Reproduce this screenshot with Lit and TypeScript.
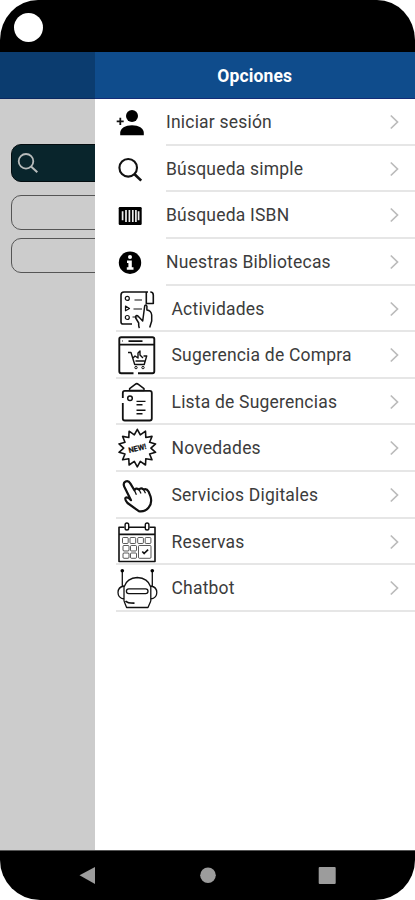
import { LitElement, html, svg, css } from "lit";
import { customElement } from "lit/decorators.js";
import { classMap } from "lit/directives/class-map.js";

const burst = Array.from({ length: 28 }, (_, i) => {
  const a = (i * Math.PI) / 14 - Math.PI / 2;
  const r = i % 2 ? 13.6 : 18.8;
  return `${(20.3 + r * Math.cos(a)).toFixed(1)},${(23.1 + r * Math.sin(a)).toFixed(1)}`;
}).join(" ");

const icons = {
  login: svg`<g class="fill"><circle cx="15" cy="17" r="6"/><path d="M3.2 36.2v-2.4c0-4.7 5.2-7.6 11.8-7.6s11.8 2.9 11.8 7.6v2.4z"/></g>
    <path stroke-width="1.8" d="M-.3 22.3h7M3.3 18.7v7.2"/>`,
  search: svg`<circle cx="11.2" cy="21.8" r="8.8" stroke-width="2.1"/><path stroke-width="2.7" d="m17.6 28.2 6.6 6.4"/>`,
  isbn: svg`<rect class="fill" x="1.7" y="15" width="23" height="18" rx="1.2"/>
    <path class="white" stroke-width="1.7" d="M5.6 19.3v9M9 17.9v12M12.4 17.9v12M15.8 17.9v12M18.9 17.9v12M21.6 19.3v9"/>`,
  info: svg`<circle class="fill" cx="13" cy="23.7" r="11.2"/><circle class="paper" cx="13" cy="18" r="2"/>
    <path class="paper" d="M10 21.5h4.8v6.7h1.7v2.5H9.8v-2.5h1.6V24H10z"/>`,
  activities: svg`<path stroke-width="1.6" d="M31 6H7Q4 6 4 9v27q0 2 2 2h9M29.3 6v11.5h7V9q0-3-3-3"/>
    <g stroke-width="1.2"><circle cx="10.3" cy="12.4" r="2"/><path d="m8.5 20 4 2.4-4 2.4z"/><circle cx="10.3" cy="31.5" r="2"/><path d="M17.5 14h7.5M16.5 23h8.5M15.5 31h5"/></g>
    <path stroke-width="1.5" d="M22.5 42q-1-1-.8-5l-3-5q-.7-3 2-2.3l5 5.3 2-15q1.2-2 2.2 0M29.9 20v4q4.3.5 4.8 5v6l-2 6.5"/>`,
  purchase: svg`<path stroke-width="1.9" d="M16.5 41.2H4.2q-1.9 0-1.9-2V7q0-1.8 1.9-1.8h31.2q1.9 0 1.9 1.8v32.2q0 2-1.9 2H21M2.3 12.6h35M11.5 9.1h14"/>
    <path stroke-width=".9" d="M5 9h1"/><path stroke-width="1.4" d="M11 20.5h3l3.7 12h9.5l2.5-8.5h-3.2M16 26l2-2 3 2v-5l2-2v4l3 3M18.5 29h9"/>
    <circle cx="19" cy="35.6" r="1.2"/><circle cx="26" cy="35.6" r="1.2"/>`,
  list: svg`<path stroke-width="1.8" d="M5.8 24v15.5q0 2 2 2h25q2 0 2-2V14q0-2.2-2-2.2h-25q-2 0-2 2.2v5"/>
    <path stroke-width="1.5" d="M12.6 11.5V9.7l5.6-4.4q1.6-1.3 3.2 0L27 9.7v1.8z"/><circle cx="13" cy="19.2" r="2.3" stroke-width="1.5"/>
    <path stroke-width="1.4" d="M19.5 22.4h9M19.5 25.8h6M19.5 31.3h9M19.5 34.7h6"/>`,
  news: svg`<polygon points=${burst} stroke-width="1.6"/><text x="20.3" y="26" transform="rotate(-14 20.3 23)">NEW!</text>`,
  digital: svg`<path stroke-width="2.2" d="M8.7 25.7q2-1 5.3 2.5L7.2 14.5Q5.8 11 8.6 9.6t5 2.3l3.8 6.4q1.2-2.8 4.6-.8 2-2.2 4.5 0 3-1.6 5.2 2.3l1.8 4.5q2 7.2-2 11.4-3.8 4.5-9.7 3.5L10.5 31q-3.2-3.7-1.8-5.3z"/>
    <path stroke-width="1.3" d="m17.4 18.3 2 4.4m2.6-5.2 2 4m2.5-4 2 3.8"/>`,
  bookings: svg`<path stroke-width="1.6" d="M7.5 8.3H2v34.2h36V8.3h-5.5M12 8.3h16M2 15.4h36"/><rect x="8.1" y="4" width="3.6" height="7" rx="1.8" stroke-width="1.4"/><rect x="28.3" y="4" width="3.6" height="7" rx="1.8" stroke-width="1.4"/>
    <g stroke-width=".7"><rect x="5.5" y="18.5" width="5.7" height="6" rx="1"/><rect x="13" y="18.5" width="5.7" height="6" rx="1"/><rect x="20.7" y="18.5" width="5.7" height="6" rx="1"/><rect x="28.2" y="18.5" width="5.7" height="6" rx="1"/>
    <rect x="6" y="26.5" width="6" height="5.5" rx="1"/><rect x="13.5" y="26.5" width="6" height="5.5" rx="1"/><rect x="6" y="34" width="6" height="5.3" rx="1"/><rect x="13.5" y="34" width="6" height="5.3" rx="1"/><rect x="21.5" y="26.5" width="12.5" height="12.8" rx="1"/></g>
    <path stroke-width="1.7" d="m25.3 32.5 1.8 2 4-3.8"/>`,
  chatbot: svg`<g stroke-width="1.3"><path d="M5.3 7v14M35.3 7v14M7 22Q10 12.8 20.3 12.5 30.8 12.8 33.8 22M7 21v15M33.8 21v15M7 21q-6 1-6 6.5T7 34M33.8 21q6 1 6 6.5t-6 6.5M7 36l2.6 6.5h21.4L33.8 36"/>
    <rect x="9.4" y="23.8" width="21.6" height="4.9" rx="2.4"/><path d="M8.5 36q2 2.3 9 2.2" stroke-width="1.8"/></g><circle class="fill" cx="5.3" cy="5.8" r="1.8"/><circle class="fill" cx="35.3" cy="5.8" r="1.8"/>`,
};

const items = [
  { icon: icons.login, label: "Iniciar sesión" },
  { icon: icons.search, label: "Búsqueda simple" },
  { icon: icons.isbn, label: "Búsqueda ISBN" },
  { icon: icons.info, label: "Nuestras Bibliotecas" },
  { icon: icons.activities, label: "Actividades", wide: true },
  { icon: icons.purchase, label: "Sugerencia de Compra", wide: true },
  { icon: icons.list, label: "Lista de Sugerencias", wide: true },
  { icon: icons.news, label: "Novedades", wide: true },
  { icon: icons.digital, label: "Servicios Digitales", wide: true },
  { icon: icons.bookings, label: "Reservas", wide: true },
  { icon: icons.chatbot, label: "Chatbot", wide: true },
];

@customElement("app-root")
export class AppRoot extends LitElement {
  static styles = css`
    :host { display: flex; flex-direction: column; height: 900px; background: #fff; font-family: Roboto, sans-serif; overflow: hidden; }
    * { box-sizing: border-box; }
    .status { height: 52.4px; flex: none; background: #000; border-radius: 38px 38px 0 0 / 40px 40px 0 0; padding: 12.5px 0 0 13.5px; }
    .camera { width: 29px; height: 29px; border-radius: 50%; background: #fff; }
    .body { flex: 1; display: flex; min-height: 0; }
    .behind { width: 94.5px; flex: none; background: #ccc; overflow: hidden; }
    .bar { height: 46.8px; background: #0f4c8c; border-bottom: 1.5px solid #142d78; display: flex; align-items: center; justify-content: center; }
    .behind .bar { background: #0b3c6f; border-color: #0b2860; }
    .fields { display: flex; flex-direction: column; padding: 45px 0 0 11px; }
    .field { width: 110px; height: 35px; border: 1px solid #555; border-radius: 10px; }
    .field + .field { margin-top: 8.5px; }
    .query { width: 110px; height: 37.5px; background: #09252c; border: 1.5px solid #050d10; border-radius: 10px; margin-bottom: 13px; padding: 6.5px 0 0 5px; }
    .query svg { display: block; width: 22px; height: 22px; stroke: #b8bcbc; fill: none; }
    .drawer { flex: 1; background: #fff; min-width: 0; }
    .title { color: #fff; font-size: 17.5px; font-weight: 700; letter-spacing: .15px; line-height: 20px; padding-top: 1px; }
    .row { display: flex; height: 46.6px; padding-left: 22.5px; }
    .icon { width: 40px; height: 46.6px; flex: none; overflow: visible; fill: none; stroke: #111; stroke-linejoin: round; }
    .icon .fill { fill: #000; stroke: none; }
    .icon .paper { fill: #fff; stroke: none; }
    .icon .white { stroke: #eee; }
    .icon text { font: 700 7.5px Roboto, sans-serif; fill: #111; stroke: #111; stroke-width: .2px; text-anchor: middle; }
    .content { flex: 1; display: flex; align-items: center; justify-content: space-between; border-bottom: 2px solid #e6e6e6; padding-right: 15px; margin-left: 9px; padding-top: 1.5px; }
    .row.wide .content { margin-left: -41px; padding-left: 55.5px; }
    .label { font-size: 17.5px; line-height: 20px; letter-spacing: .2px; color: #3c3c3c; white-space: nowrap; }
    .chevron { width: 11px; height: 16px; fill: none; stroke: #bbb; stroke-width: 1.7; }
    .nav { height: 50px; flex: none; background: #000; border-top: 1px solid #555; border-radius: 0 0 40px 40px / 0 0 40px 40px; display: flex; }
    .nav svg { width: 415px; height: 49px; fill: #9c9c9c; }
  `;

  render() {
    return html`
      <div class="status"><div class="camera"></div></div>
      <div class="body">
        <div class="behind">
          <div class="bar"></div>
          <div class="fields">
            <div class="query"><svg viewBox="0 0 22 22"><circle cx="9" cy="9.3" r="7.3" stroke-width="1.8"/><path stroke-width="2" d="m14.3 14.7 6 5.6"/></svg></div>
            <div class="field"></div>
            <div class="field"></div>
          </div>
        </div>
        <div class="drawer">
          <div class="bar"><span class="title">Opciones</span></div>
          ${items.map((it) => html`
            <div class=${classMap({ row: true, wide: !!it.wide })}>
              <svg class="icon" viewBox="0 0 40 46.6">${it.icon}</svg>
              <div class="content">
                <span class="label">${it.label}</span>
                <svg class="chevron" viewBox="0 0 11 16"><path d="m1.8 1.5 6.7 6.5-6.7 6.5"/></svg>
              </div>
            </div>`)}
        </div>
      </div>
      <div class="nav"><svg viewBox="0 0 415 49"><path d="M79.5 24.3 95 16v17z"/><circle cx="208" cy="24.3" r="7.8"/><rect x="318.7" y="16" width="17" height="17" rx="1"/></svg></div>
    `;
  }
}
